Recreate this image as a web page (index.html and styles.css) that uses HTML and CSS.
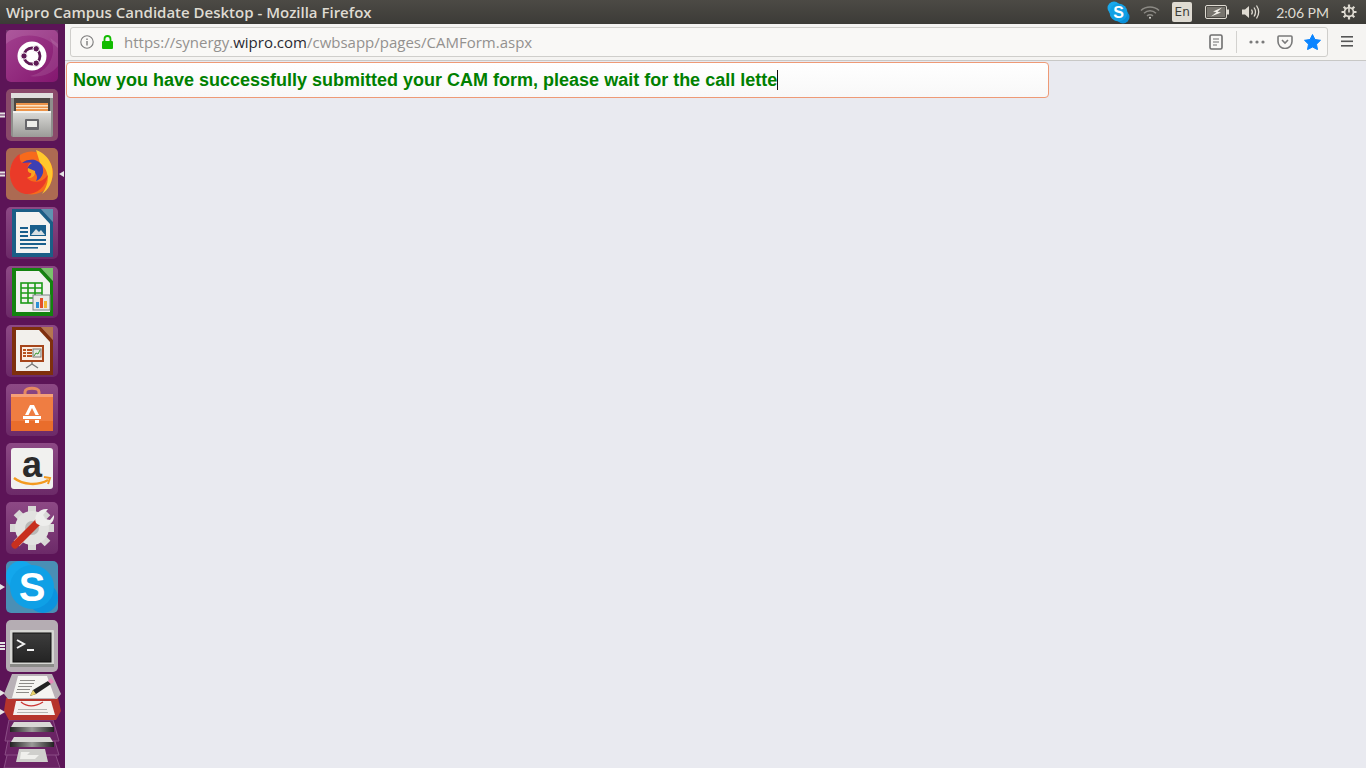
FILE: index.html
```html
<!DOCTYPE html>
<html lang="en">
<head>
    <meta charset="UTF-8">
    <meta name="viewport" content="width=device-width, initial-scale=1.0">
    <title>Wipro Campus Candidate Desktop - Mozilla Firefox</title>
    <link rel="stylesheet" href="styles.css">
</head>
<body>
    <header class="topbar">
        <span class="window-title">Wipro Campus Candidate Desktop - Mozilla Firefox</span>
        <div class="tray">
            <svg class="tray-skype" width="23" height="23" viewBox="0 0 23 23"><circle cx="7" cy="7" r="6.500" fill="#1aa9ec"/><circle cx="16" cy="16" r="6.500" fill="#0a8fd8"/><circle cx="11.500" cy="11.500" r="9" fill="#12a0e4"/><text x="11.500" y="17" class="skype-s" font-size="16" text-anchor="middle">S</text></svg>
            <svg class="tray-wifi" width="20" height="14" viewBox="0 0 20 14" fill="none" stroke="#8c8a85" stroke-width="1.500"><path d="M1 5.500C6 .8 14 .8 19 5.500"/><path d="M4 8.200C7.500 5 12.500 5 16 8.200"/><path d="M7 10.800C9 9.300 11 9.300 13 10.800"/><circle cx="10" cy="12.800" r="1" fill="#e0ded9" stroke="none"/></svg>
            <span class="tray-lang">En</span>
            <svg class="tray-battery" width="24" height="14" viewBox="0 0 24 14"><rect x=".5" y=".5" width="21" height="13" rx="1.500" fill="#4a4843" stroke="#dfdbd2"/><rect x="22" y="4.500" width="2" height="5" fill="#dfdbd2"/><rect x="2" y="2" width="18" height="10" fill="#77746d"/><path d="M17 2.500 8 6.500l3.500.8L6 11.500l10-4-3.500-.8z" fill="#f2efe8"/></svg>
            <svg class="tray-volume" width="20" height="16" viewBox="0 0 20 16" fill="none" stroke="#dfdbd2" stroke-width="1.300"><path d="M1 5.500h3L8 2v12L4 10.500H1z" fill="#dfdbd2" stroke="none"/><path d="M10.500 5.500c1 1.500 1 3.500 0 5"/><path d="M13 3.500c1.800 2.700 1.800 6.300 0 9"/><path d="M15.500 1.500c2.700 4 2.700 9 0 13"/></svg>
            <span class="tray-clock">2:06 PM</span>
            <svg class="tray-power" width="16" height="16" viewBox="0 0 16 16"><g stroke="#dfdbd2" stroke-width="2.200"><path d="M8 .5v15M.5 8h15M2.700 2.700l10.600 10.600M13.300 2.700 2.700 13.300"/></g><circle cx="8" cy="8" r="5.300" fill="#dfdbd2"/><circle cx="8" cy="8" r="3.600" fill="#45433e"/><path d="M8 4v4.500" stroke="#dfdbd2" stroke-width="1.600"/></svg>
        </div>
    </header>

    <div class="desktop">
        <nav class="launcher">
            <div class="tile tile-dash">
                <svg width="52" height="52" viewBox="0 0 52 52"><path d="M0 14C14 2 36 2 52 18V0H0z" fill="#fff" opacity=".12"/><path d="M44 8c8 14 0 34-20 38 10 2 22-2 28-10V14z" fill="#fff" opacity=".1"/><circle cx="26" cy="26" r="14.500" fill="#fff"/><circle cx="26" cy="26" r="8" fill="none" stroke="#5e1a55" stroke-width="2.800"/><circle cx="18" cy="26" r="3.200" fill="#5e1a55" stroke="#fff"/><circle cx="30.200" cy="18.800" r="3.200" fill="#5e1a55" stroke="#fff"/><circle cx="30.200" cy="33.200" r="3.200" fill="#5e1a55" stroke="#fff"/></svg>
            </div>
            <div class="tile tile-files">
                <span class="pips"><i></i><i></i></span>
                <svg width="52" height="52" viewBox="0 0 52 52"><defs><linearGradient id="cabinet" x1="0" y1="0" x2="0" y2="1"><stop offset="0" stop-color="#dcdcd9"/><stop offset="1" stop-color="#9b9b98"/></linearGradient></defs><rect x="5" y="4" width="42" height="44" rx="2" fill="#8f8f8c"/><rect x="5" y="4" width="42" height="5" fill="#e0e0dd"/><rect x="8" y="9" width="36" height="13" fill="#4c4843"/><rect x="10" y="14" width="32" height="8" fill="#ec9449"/><rect x="10" y="16" width="32" height="1.500" fill="#fbe3c3"/><rect x="10" y="19" width="32" height="1" fill="#fbe3c3"/><rect x="7" y="22" width="38" height="26" fill="url(#cabinet)"/><rect x="7" y="22" width="38" height="2" fill="#f2f2ef"/><rect x="19" y="30" width="14" height="11" rx="1" fill="#66666a"/><rect x="21" y="32" width="10" height="6" fill="#ecece9"/></svg>
            </div>
            <div class="tile tile-firefox">
                <span class="pips"><i></i><i></i></span>
                <span class="active-mark"></span>
                <svg width="52" height="52" viewBox="0 0 52 52"><circle cx="25.500" cy="25" r="21.500" fill="#f76a1c"/><path d="M30 2c14 5 21 20 14 35-2 4-5 7-8 9 9-12 7-24-2-31z" fill="#ffc82d"/><path d="M4 26C4 17 8 9 14 6c-1 4 0 7 2 9 3-3 8-4 13-3-5 2-8 5-7 8l7 3c1 5-3 8-8 7 6 6 15 5 21-3-2 12-11 19-21 19C12 46 4 37 4 26z" fill="#ea3a28"/><path d="M16 15c3-3 9-4 13-3 6 2 9 7 8 13-1 4-4 7-7 8 2-3 1-7-2-9l-6-2c-1-3 1-5 4-7-4-1-7 0-10 0z" fill="#3d3fb3"/><path d="M22 20l7 3c1 5-3 8-8 7 3-1 5-3 4-5-2 0-4-2-3-5z" fill="#fba31e"/></svg>
            </div>
            <div class="tile tile-writer">
                <svg width="52" height="52" viewBox="0 0 52 52"><path d="M6 2h29l12 13v35H6z" fill="#1b5e86"/><path d="M10 5h23l11 12v29H10z" fill="#f3f3f1"/><path d="M35 2h12v13z" fill="#5f93b0"/><g fill="#195f8c"><rect x="14" y="20" width="8" height="2"/><rect x="14" y="24" width="8" height="2"/><rect x="14" y="28" width="8" height="2"/><rect x="14" y="32" width="26" height="2"/><rect x="14" y="36" width="26" height="2"/><rect x="14" y="40" width="18" height="1.600"/><rect x="24" y="18" width="16" height="11"/></g><path d="M25 28l5-6 3 3 2-2 4 5z" fill="#d8dfe2"/></svg>
            </div>
            <div class="tile tile-calc">
                <svg width="52" height="52" viewBox="0 0 52 52"><path d="M6 2h29l12 13v35H6z" fill="#14820f"/><path d="M10 5h23l11 12v29H10z" fill="#f2f2ef"/><path d="M35 2h12v13z" fill="#79c36b"/><g fill="none" stroke="#1c9a18" stroke-width="1.600"><rect x="15" y="17" width="21" height="20"/><path d="M15 22h21M15 27h21M15 32h21M22 17v20M29 17v20"/></g><rect x="27" y="29" width="17" height="15" fill="#e8e8e6" stroke="#7b8185"/><rect x="30" y="36" width="3" height="6" fill="#2b8fd6"/><rect x="34" y="32" width="3" height="10" fill="#e2502a"/><rect x="38" y="35" width="3" height="7" fill="#f2b632"/></svg>
            </div>
            <div class="tile tile-impress">
                <svg width="52" height="52" viewBox="0 0 52 52"><path d="M6 2h29l12 13v35H6z" fill="#7e2f0d"/><path d="M10 5h23l11 12v29H10z" fill="#f2f0ec"/><path d="M35 2h12v13z" fill="#b5764f"/><rect x="14" y="20" width="24" height="17" fill="#a6461c"/><rect x="16" y="22" width="20" height="13" fill="#fbeee3"/><g fill="#b9531f"><rect x="17" y="24" width="3" height="2"/><rect x="21" y="24" width="5" height="2"/><rect x="17" y="27" width="3" height="2"/><rect x="21" y="27" width="5" height="2"/><rect x="17" y="30" width="3" height="2"/><rect x="21" y="30" width="5" height="2"/></g><rect x="27" y="24" width="8" height="8" fill="#e3e8df" stroke="#777"/><path d="M28 31l2-3 2 1 2-4" fill="none" stroke="#3d9a35"/><path d="M26 37v2l-6 4M26 39l6 4" fill="none" stroke="#777" stroke-width="1.400"/></svg>
            </div>
            <div class="tile tile-store">
                <svg width="52" height="52" viewBox="0 0 52 52"><path d="M19 14V8c0-5 14-5 14 0v6" fill="none" stroke="#e58a62" stroke-width="3"/><path d="M5 10h42v37H5z" fill="#ef7d42"/><path d="M5 10h42v3H5z" fill="#f5a078"/><path d="M5 37h42v10H5z" fill="#e96d2c"/><g fill="#fff"><path d="M24 21h4l5 10h-3.500l-3.500-7-3.500 7H19z"/><rect x="17" y="32" width="18" height="3"/><rect x="19" y="36" width="4" height="3"/><rect x="29" y="36" width="4" height="3"/></g></svg>
            </div>
            <div class="tile tile-amazon">
                <svg width="52" height="52" viewBox="0 0 52 52"><rect x="5" y="5" width="42" height="41" rx="3" fill="#f1f1ef"/><text x="26" y="34" class="amazon-a" font-size="36" text-anchor="middle">a</text><path d="M8 35c9 7 24 8 34 2" fill="none" stroke="#f39a1f" stroke-width="2.400"/><path d="M38 34l6 1-2 6" fill="none" stroke="#f39a1f" stroke-width="2"/></svg>
            </div>
            <div class="tile tile-tools">
                <svg width="52" height="52" viewBox="0 0 52 52"><g stroke="#d8d8d6" stroke-width="8"><path d="M26 4v44M4 26h44M10.500 10.500l31 31M41.500 10.500l-31 31"/></g><circle cx="26" cy="26" r="17" fill="#e2e2e0"/><circle cx="26" cy="26" r="7" fill="#b9b9b7"/><path d="M9 43 34 18" stroke="#c8301f" stroke-width="7" stroke-linecap="round"/><path d="M30 21c-3-7 3-15 12-14l-5 6 2 4 5 1 4-5c1 9-9 15-18 8z" fill="#eeeeec"/></svg>
            </div>
            <div class="tile tile-skype">
                <span class="pip-single"></span>
                <svg width="52" height="52" viewBox="0 0 52 52"><circle cx="15" cy="15" r="15" fill="#13a7ec"/><circle cx="37" cy="37" r="15" fill="#0c93de"/><circle cx="26" cy="26" r="22" fill="#0fa0e6"/><text x="26" y="40" class="skype-s" font-size="40" text-anchor="middle">S</text></svg>
            </div>
            <div class="tile tile-terminal">
                <span class="pips"><i></i><i></i><i></i></span>
                <svg width="52" height="52" viewBox="0 0 52 52"><defs><linearGradient id="term" x1="0" y1="0" x2="0" y2="1"><stop offset="0" stop-color="#3d3d3d"/><stop offset="1" stop-color="#242424"/></linearGradient></defs><rect x="4" y="10" width="44" height="37" rx="1" fill="#d6d6d3"/><rect x="4" y="44" width="44" height="3" fill="#8b8b88"/><rect x="7" y="13" width="38" height="29" fill="url(#term)" stroke="#111"/><path d="M11 20l7 4-7 4" fill="none" stroke="#f2f2f2" stroke-width="2"/><rect x="21" y="29" width="7" height="2" fill="#f2f2f2"/></svg>
            </div>
            <div class="stack">
                <span class="pip-single pip-doc"></span>
                <span class="pip-single pip-red"></span>
                <svg width="65" height="95" viewBox="0 0 65 95"><defs><linearGradient id="strip" x1="0" y1="0" x2="1" y2="0"><stop offset="0" stop-color="#222"/><stop offset=".5" stop-color="#9a9a98"/><stop offset="1" stop-color="#222"/></linearGradient></defs><g fill="#6a2364" stroke="#8a4d85"><path d="M9 74h44l7 21H4z"/><path d="M9 62h44l6 20H5z"/><path d="M9 47h44l6 21H5z"/></g><path d="M6 25h52l3 13-5 9H9l-5-9z" fill="#b6342c"/><path d="M16 28h35l4 14H13z" fill="#f4f1ef"/><path d="M21 29c6 5 14 5 22 0" fill="none" stroke="#c33" stroke-width="1.300"/><g fill="#b5b3b1"><rect x="18" y="36" width="29" height="1"/><rect x="17" y="39" width="31" height="1"/></g><path d="M12 1h40l9 20-4 5H8l-4-5z" fill="#b9b1b7"/><path d="M18 3h29l8 22H12z" fill="#f5f4f1"/><g fill="#8c8a87"><rect x="20" y="7" width="15" height="1"/><rect x="19" y="10" width="15" height="1"/><rect x="18" y="13" width="14" height="1"/><rect x="17" y="16" width="13" height="1"/><rect x="16" y="19" width="13" height="1"/></g><path d="M30 23l3-6 15-9 3 3-15 10z" fill="#222"/><path d="M30 23l3-6 3 4z" fill="#e8d26a"/><path d="M48 8l3 3 3-2-3-4z" fill="#e58ab8"/><path d="M14 49h36l3 5H11z" fill="#d8d8d5"/><rect x="10" y="54" width="44" height="5" fill="url(#strip)"/><path d="M14 64h36l3 5H11z" fill="#d8d8d5"/><rect x="10" y="69" width="44" height="5" fill="url(#strip)"/><path d="M19 76h26l3 13H16z" fill="#cfcfcc"/><path d="M21 79h9l-3 3h12l-4 4H20z" fill="#efefec"/></svg>
            </div>
        </nav>

        <main class="browser">
            <div class="toolbar">
                <div class="urlbar">
                    <svg class="info-icon" width="14" height="14" viewBox="0 0 14 14"><circle cx="7" cy="7" r="6.200" fill="none" stroke="#7c7c7c" stroke-width="1.100"/><rect x="6.300" y="6" width="1.400" height="4.500" fill="#7c7c7c"/><rect x="6.300" y="3.500" width="1.400" height="1.500" fill="#7c7c7c"/></svg>
                    <svg class="lock-icon" width="13" height="14" viewBox="0 0 13 14"><path d="M3.500 6V4a3 3 0 0 1 6 0v2" fill="none" stroke="#12bc00" stroke-width="1.800"/><rect x="1" y="6" width="11" height="8" rx="1" fill="#12bc00"/></svg>
                    <span class="url">https://synergy.<b>wipro.com</b>/cwbsapp/pages/CAMForm.aspx</span>
                    <svg class="reader-icon" width="14" height="16" viewBox="0 0 14 16" fill="none" stroke="#6f6f6f"><rect x="1" y="1" width="12" height="14" rx="1.500" stroke-width="1.600"/><path d="M4 5h6M4 8h6M4 11h4"/></svg>
                    <span class="url-divider"></span>
                    <svg class="more-icon" width="16" height="4" viewBox="0 0 16 4" fill="#7a7a7a"><circle cx="2" cy="2" r="1.600"/><circle cx="8" cy="2" r="1.600"/><circle cx="14" cy="2" r="1.600"/></svg>
                    <svg class="pocket-icon" width="16" height="14" viewBox="0 0 16 14" fill="none"><path d="M2 1h12a1 1 0 0 1 1 1v4.500a7 7 0 0 1-14 0V2a1 1 0 0 1 1-1z" stroke="#7a7a7a" stroke-width="1.600"/><path d="M5 5l3 3 3-3" stroke="#7a7a7a" stroke-width="1.600"/></svg>
                    <svg class="star-icon" width="17" height="16" viewBox="0 0 17 16"><path d="M8.500.5l2.500 5 5.500.8-4 3.900 1 5.400-5-2.600-5 2.600 1-5.400-4-3.900 5.500-.8z" fill="#0a84ff" stroke="#0a84ff" stroke-linejoin="round"/></svg>
                </div>
                <svg class="menu-icon" width="12" height="11" viewBox="0 0 12 11" fill="#555"><rect width="12" height="1.600"/><rect y="4.500" width="12" height="1.600"/><rect y="9" width="12" height="1.600"/></svg>
            </div>
            <div class="content">
                <div class="status-box">Now you have successfully submitted your CAM form, please wait for the call lette<span class="caret"></span></div>
            </div>
        </main>
    </div>
</body>
</html>
```

FILE: styles.css
```css
html, body {
    height: 100%;
}
body {
    margin: 0;
    height: 768px;
    overflow: hidden;
    display: flex;
    flex-direction: column;
    font-family: "Open Sans", sans-serif;
    background-color: #e9eaf0;
}

/* top panel */
.topbar {
    height: 24px;
    flex: none;
    display: flex;
    align-items: center;
    justify-content: space-between;
    background: linear-gradient(#4c4a45, #3c3b37);
    color: #dfdbd2;
}
.window-title {
    margin-left: 6px;
    font-size: 15px;
    font-weight: 600;
}
.tray {
    display: flex;
    align-items: center;
    height: 24px;
}
.tray-skype {
    margin-right: 10px;
}
.tray-wifi {
    margin-right: 12px;
}
.tray-lang {
    width: 20px;
    height: 20px;
    margin-right: 13px;
    background-color: #dfdbd2;
    border-radius: 2px;
    color: #3c3b37;
    font-family: "DejaVu Sans", sans-serif;
    font-size: 12px;
    line-height: 20px;
    text-align: center;
}
.tray-battery {
    margin-right: 12px;
}
.tray-volume {
    margin-right: 15px;
}
.tray-clock {
    margin-right: 12px;
    font-family: Lato, sans-serif;
    font-size: 14px;
}
.tray-power {
    margin-right: 9px;
}
.skype-s {
    fill: #fff;
    font-family: "Liberation Sans", sans-serif;
    font-weight: 700;
}
.amazon-a {
    fill: #2b2b2b;
    font-family: "Liberation Sans", sans-serif;
    font-weight: 700;
}

.desktop {
    flex: 1;
    display: flex;
    min-height: 0;
}

/* launcher */
.launcher {
    width: 65px;
    flex: none;
    box-sizing: border-box;
    padding: 6px 0 0 6px;
    display: flex;
    flex-direction: column;
    gap: 7px;
    background-color: #5c1457;
    overflow: hidden;
}
.tile {
    position: relative;
    width: 52px;
    height: 52px;
    flex: none;
    border-radius: 5px;
}
.tile svg {
    display: block;
}
.tile-dash {
    background: linear-gradient(135deg, #a2418f, #84176f);
}
.tile-files {
    background-color: #8a4a6a;
}
.tile-firefox {
    background-color: #ac6a52;
}
.tile-writer, .tile-calc, .tile-impress, .tile-store, .tile-amazon, .tile-tools {
    background: linear-gradient(#8d4985, #6c2a68);
}
.tile-skype {
    background-color: #4a8fb5;
}
.tile-terminal {
    background-color: #b5adb3;
}
.stack {
    position: relative;
    height: 95px;
    flex: none;
    margin: -6px 0 0 -6px;
}
.stack svg {
    display: block;
}
.pips {
    position: absolute;
    left: -6px;
    top: 50%;
    transform: translateY(-50%);
    display: flex;
    flex-direction: column;
    gap: 1px;
}
.pips i {
    display: block;
    width: 5px;
    height: 2px;
    background-color: #e6e4e4;
}
.pip-single {
    position: absolute;
    left: -6px;
    top: 23px;
    width: 0;
    height: 0;
    border-top: 3px solid transparent;
    border-bottom: 3px solid transparent;
    border-left: 5px solid #e6e4e4;
}
.stack .pip-doc {
    left: 0;
    top: 17px;
    z-index: 1;
}
.stack .pip-red {
    left: 0;
    top: 36px;
    z-index: 1;
}
.active-mark {
    position: absolute;
    right: -6px;
    top: 23px;
    width: 0;
    height: 0;
    border-top: 3px solid transparent;
    border-bottom: 3px solid transparent;
    border-right: 5px solid #e6e4e4;
}

/* browser window */
.browser {
    flex: 1;
    min-width: 0;
    display: flex;
    flex-direction: column;
}
.toolbar {
    height: 37px;
    flex: none;
    box-sizing: border-box;
    padding: 3px 13px 0 5px;
    display: flex;
    align-items: flex-start;
    background-color: #f5f4f2;
    border-bottom: 1px solid #c8c8c6;
}
.urlbar {
    flex: 1;
    height: 30px;
    box-sizing: border-box;
    display: flex;
    align-items: center;
    padding: 0 6px 0 9px;
    background-color: #f9f8f6;
    border: 1px solid #cfcecb;
    border-radius: 3px;
}
.info-icon {
    margin-right: 7px;
}
.lock-icon {
    margin-right: 10px;
}
.url {
    flex: 1;
    font-size: 15px;
    color: #93918f;
    white-space: nowrap;
}
.url b {
    font-weight: 400;
    color: #2a2a33;
}
.reader-icon {
    margin-right: 13px;
}
.url-divider {
    width: 1px;
    height: 22px;
    margin-right: 12px;
    background-color: #d3d2cf;
}
.more-icon {
    margin-right: 12px;
}
.pocket-icon {
    margin-right: 11px;
}
.menu-icon {
    margin: 9px 0 0 13px;
}
.content {
    flex: 1;
    padding: 1px 0 0 1px;
}
.status-box {
    width: 983px;
    height: 36px;
    box-sizing: border-box;
    padding-left: 6px;
    display: flex;
    align-items: center;
    background: linear-gradient(#fff, #f8f8f8);
    border: 1px solid #ee9a76;
    border-radius: 4px;
    color: #008000;
    font-family: "Liberation Sans", sans-serif;
    font-size: 18px;
    font-weight: 700;
    white-space: pre;
}
.caret {
    width: 1px;
    height: 20px;
    background-color: #111;
}
```
